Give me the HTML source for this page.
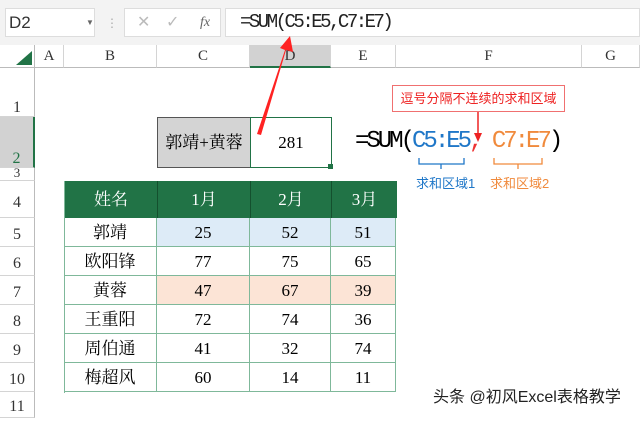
<!DOCTYPE html><html><head><meta charset="utf-8"><style>
body{margin:0;width:640px;height:418px;overflow:hidden;background:#fff;font-family:"Liberation Serif","Noto Serif CJK SC",serif;position:relative}
div{position:absolute;box-sizing:border-box}
.ch{top:45px;height:23px;background:#fff;border-right:1px solid #d4d4d4;border-bottom:1px solid #bbb;text-align:center;font-size:15px;line-height:23px;color:#333}
.rh{left:0;width:35px;background:#fff;border-bottom:1px solid #d4d4d4;border-right:1px solid #bbb;text-align:center;font-size:16px;color:#333}
.c{text-align:center;font-size:17px;line-height:29px;border-right:1px solid #7fb89a;border-bottom:1px solid #7fb89a;height:29px}
</style></head><body>
<div style="left:0;top:0;width:640px;height:45px;background:#f3f3f3"></div>
<div style="left:5px;top:8px;width:90px;height:29px;background:#fff;border:1px solid #ddd;font-size:17px;line-height:27px;padding-left:3px;font-family:'Liberation Sans',sans-serif;color:#333">D2<span style="position:absolute;left:80px;font-size:8px;color:#666">▼</span></div>
<div style="left:106px;top:16px;color:#aaa;font-size:12px">⋮</div>
<div style="left:124px;top:8px;width:97px;height:29px;background:#fff;border:1px solid #ddd;color:#bbb;font-size:16px;line-height:27px;font-family:'Liberation Sans',sans-serif"><span style="position:absolute;left:12px">✕</span><span style="position:absolute;left:41px">✓</span><span style="position:absolute;left:75px;color:#666;font-style:italic;font-family:'Liberation Serif';font-size:14px">fx</span></div>
<div style="left:225px;top:8px;width:415px;height:29px;background:#fff;border:1px solid #ddd;font-size:19px;line-height:27px;padding-left:14px;color:#222;font-family:'Liberation Mono',monospace;letter-spacing:-2.5px">=SUM(C5:E5,C7:E7)</div>
<div style="left:0;top:45px;width:35px;height:23px;background:#fff;border-right:1px solid #bbb;border-bottom:1px solid #bbb"></div>
<svg style="position:absolute;left:15px;top:50px" width="18" height="16"><polygon points="17,1 17,15 1,15" fill="#217346"/></svg>
<div class="ch" style="left:35px;width:29px">A</div>
<div class="ch" style="left:64px;width:93px">B</div>
<div class="ch" style="left:157px;width:93px">C</div>
<div class="ch" style="left:250px;width:81px;background:#d2d2d2;border-bottom:2px solid #217346">D</div>
<div class="ch" style="left:331px;width:65px">E</div>
<div class="ch" style="left:396px;width:186px">F</div>
<div class="ch" style="left:582px;width:58px">G</div>
<div class="rh" style="top:68px;height:49px;line-height:80px">1</div>
<div class="rh" style="top:117px;height:51px;line-height:84px;background:#d2d2d2;color:#217346;border-right:2px solid #217346">2</div>
<div class="rh" style="top:168px;height:13px;line-height:10px;font-size:13px">3</div>
<div class="rh" style="top:181px;height:37px;line-height:44px">4</div>
<div class="rh" style="top:218px;height:29px;line-height:34px">5</div>
<div class="rh" style="top:247px;height:29px;line-height:34px">6</div>
<div class="rh" style="top:276px;height:29px;line-height:34px">7</div>
<div class="rh" style="top:305px;height:29px;line-height:34px">8</div>
<div class="rh" style="top:334px;height:29px;line-height:34px">9</div>
<div class="rh" style="top:363px;height:29px;line-height:34px">10</div>
<div class="rh" style="top:392px;height:26px;line-height:30px">11</div>
<div style="left:157px;top:117px;width:94px;height:51px;background:#d4d4d4;border:1px solid #555;font-size:17px;line-height:49px;text-align:center">郭靖+黄蓉</div>
<div style="left:250px;top:117px;width:82px;height:51px;border:1px solid #217346;font-size:17px;line-height:49px;text-align:center">281</div>
<div style="left:328px;top:164px;width:5px;height:5px;background:#217346"></div>
<div style="left:355px;top:128px;font-size:24px;font-family:'Liberation Mono',monospace;letter-spacing:-3px;white-space:nowrap">=SUM(<span style="color:#1f77c8">C5:E5</span><span style="color:#e33">,</span> <span style="color:#f08a3c">C7:E7</span>)</div>
<div style="left:392px;top:85px;width:173px;height:27px;border:1px solid #f07070;color:#e22;font-family:'Liberation Sans','Noto Sans CJK SC',sans-serif;font-size:13px;line-height:25px;text-align:center">逗号分隔不连续的求和区域</div>
<svg style="position:absolute;left:0;top:0" width="640" height="418">
<line x1="478" y1="112" x2="478" y2="134" stroke="#e22" stroke-width="1.5"/><polygon points="474,133 482,133 478,142" fill="#e22"/>
<polygon points="257,134 261,135 286,50 293,52 290,36 280,48 285,50" fill="#f22"/>
<path d="M419,158 v6 h22 v5 M441,164 h23 v-6" stroke="#1f77c8" fill="none" stroke-width="1.3"/>
<path d="M494,158 v6 h24 v5 M518,164 h24 v-6" stroke="#f08a3c" fill="none" stroke-width="1.3"/>
</svg>
<div style="left:416px;top:173px;font-family:'Liberation Sans','Noto Sans CJK SC',sans-serif;font-size:13px;color:#1f77c8">求和区域1</div>
<div style="left:490px;top:173px;font-family:'Liberation Sans','Noto Sans CJK SC',sans-serif;font-size:13px;color:#f08a3c">求和区域2</div>
<div style="left:64px;top:181px;width:332px;height:212px;border-left:1px solid #7fb89a">
<div style="left:0;top:0;width:332px;height:37px;background:#217346;color:#fff;font-size:17px;line-height:37px">
<div style="left:0;width:93px;text-align:center;border-right:1px solid #14502e;height:37px">姓名</div><div style="left:93px;width:93px;text-align:center;border-right:1px solid #14502e;height:37px">1月</div><div style="left:186px;width:81px;text-align:center;border-right:1px solid #14502e;height:37px">2月</div><div style="left:267px;width:65px;text-align:center;height:37px">3月</div></div>
</div>
<div style="left:64px;top:218px">
<div class="c" style="left:0;top:0;width:93px">郭靖</div><div class="c" style="left:93px;top:0;width:93px;background:#ddebf7">25</div><div class="c" style="left:186px;top:0;width:81px;background:#ddebf7">52</div><div class="c" style="left:267px;top:0;width:65px;background:#ddebf7">51</div>
<div class="c" style="left:0;top:29px;width:93px">欧阳锋</div><div class="c" style="left:93px;top:29px;width:93px">77</div><div class="c" style="left:186px;top:29px;width:81px">75</div><div class="c" style="left:267px;top:29px;width:65px">65</div>
<div class="c" style="left:0;top:58px;width:93px">黄蓉</div><div class="c" style="left:93px;top:58px;width:93px;background:#fce4d6">47</div><div class="c" style="left:186px;top:58px;width:81px;background:#fce4d6">67</div><div class="c" style="left:267px;top:58px;width:65px;background:#fce4d6">39</div>
<div class="c" style="left:0;top:87px;width:93px">王重阳</div><div class="c" style="left:93px;top:87px;width:93px">72</div><div class="c" style="left:186px;top:87px;width:81px">74</div><div class="c" style="left:267px;top:87px;width:65px">36</div>
<div class="c" style="left:0;top:116px;width:93px">周伯通</div><div class="c" style="left:93px;top:116px;width:93px">41</div><div class="c" style="left:186px;top:116px;width:81px">32</div><div class="c" style="left:267px;top:116px;width:65px">74</div>
<div class="c" style="left:0;top:145px;width:93px">梅超风</div><div class="c" style="left:93px;top:145px;width:93px">60</div><div class="c" style="left:186px;top:145px;width:81px">14</div><div class="c" style="left:267px;top:145px;width:65px">11</div>
</div>
<div style="left:433px;top:383px;font-family:'Liberation Sans','Noto Sans CJK SC',sans-serif;font-size:16px;color:#222;white-space:nowrap;text-shadow:0 0 2px #fff">头条 @初风Excel表格教学</div>
</body></html>
